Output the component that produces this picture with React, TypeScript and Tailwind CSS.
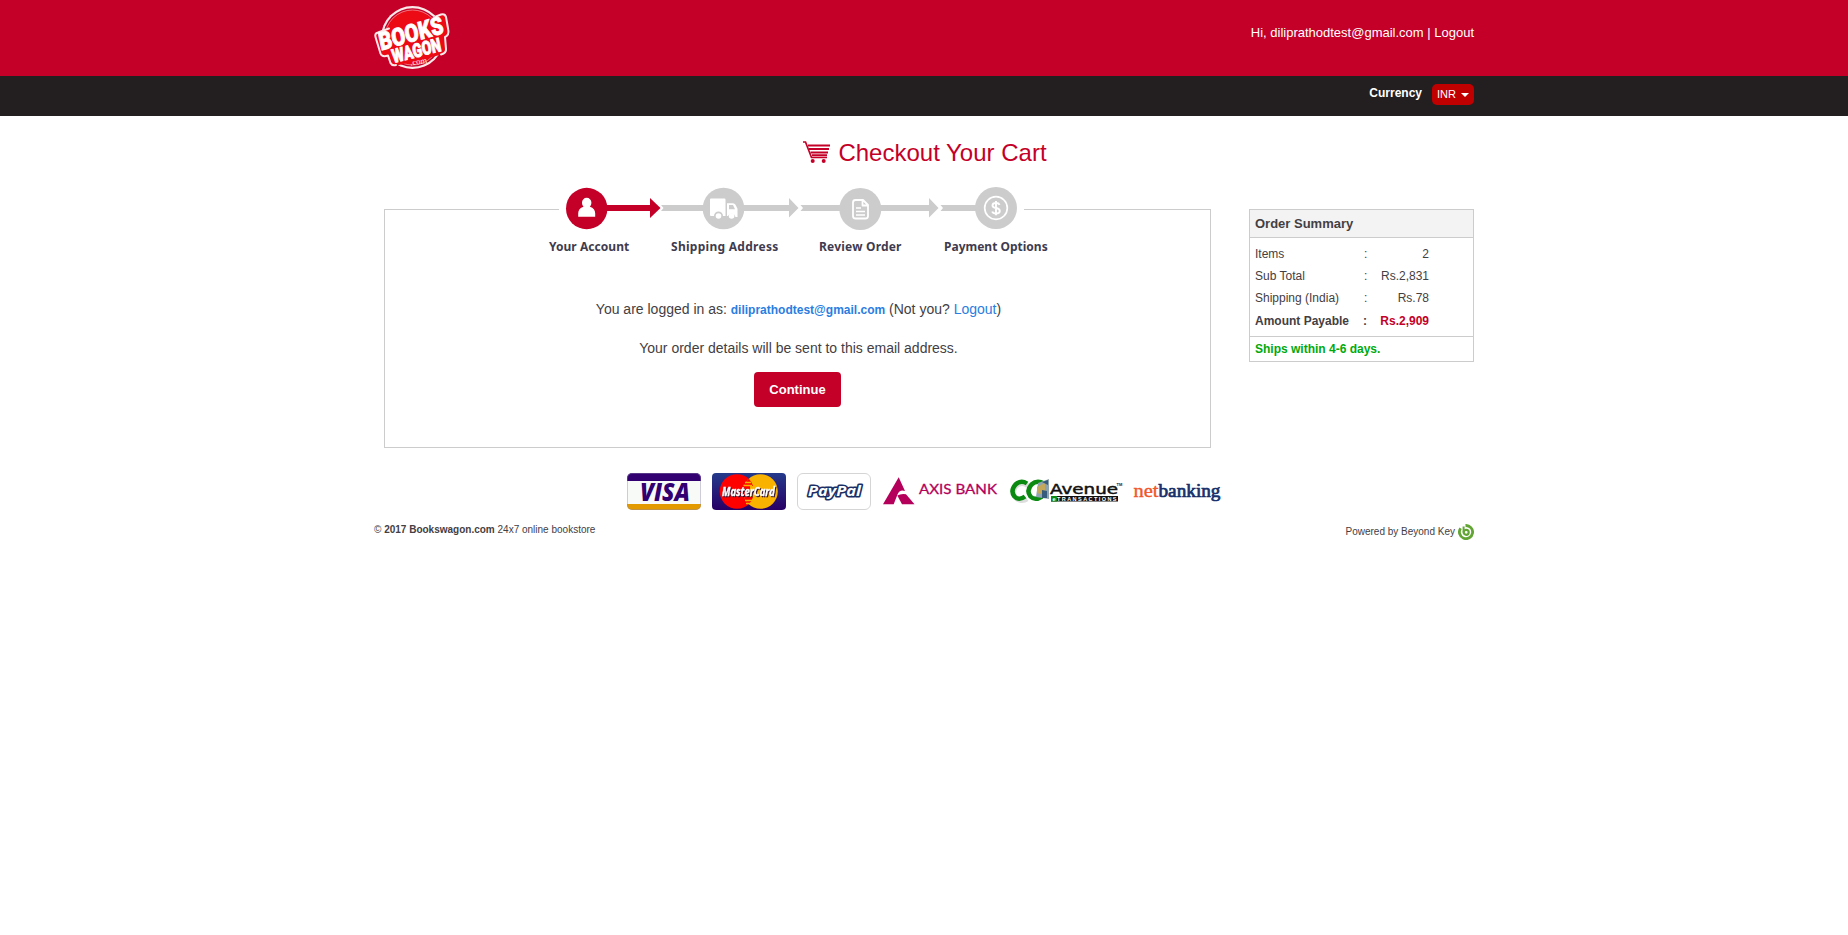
import React from "react";

function BooksWagonLogo() {
  return (
    <svg width="78" height="66" viewBox="0 0 78 66" className="overflow-visible" role="img" aria-label="BooksWagon.com">
      <circle cx="38.500" cy="31.500" r="31.500" fill="#fbe9ea" />
      <circle cx="38.500" cy="31.500" r="29.300" fill="#c40028" />
      <circle cx="38.500" cy="31.500" r="27.500" fill="#ec0a14" stroke="#f6a5ab" strokeWidth=".7" />
      <path d="M1.500 31Q.5 27.500 4 26.500L14 23.500L60 11L67 8.500Q71 7.500 72 11L74 24Q75 29 71 31L72 43Q72.500 47 68 48.500L23 59.500Q18 60.500 16.500 57L14 49.500Q8 51.500 6.500 47.500Z" fill="#ec0a14" />
      <path d="M15 22.500L4 26.500Q.5 27.500 1.500 31L6.500 47.500Q8 51.500 14 49.500L16.500 57Q18 60 22 59M62 10.500L67 8.500Q71 7.500 72 11L74.300 24Q75.300 29 71 31L72 43Q72.500 47 67 48.500" fill="none" stroke="#fbe9ea" strokeWidth="2" strokeLinejoin="round" strokeLinecap="round" />
      <g fill="#fff" stroke="#fff" strokeWidth="0.9" className="font-['Roboto',sans-serif] font-black">
        <text transform="translate(7 44.500) rotate(-15.500) skewX(-3)" fontSize="24.500" textLength="66" lengthAdjust="spacingAndGlyphs">BOOKS</text>
        <text transform="translate(19.500 57) rotate(-14) skewX(-2)" fontSize="19" textLength="50" lengthAdjust="spacingAndGlyphs">WAGON</text>
      </g>
      <text transform="translate(36.500 59.500) rotate(-9)" fontSize="8.500" fill="#fff" textLength="17" className="font-['Liberation_Serif',serif]">.com</text>
    </svg>
  );
}

function CartIcon() {
  return (
    <svg width="27" height="22" viewBox="0 0 27 22" fill="none" stroke="#c40028">
      <path d="M0 1H2.500L8.500 16.500H24" strokeWidth="1.700" />
      <path d="M5 4.500H27M6 8H26M7.500 11.500H25M9 14.300H24" strokeWidth="2" />
      <g fill="#c40028" stroke="none">
        <circle cx="9.700" cy="20" r="2" />
        <circle cx="20.700" cy="20" r="2" />
      </g>
    </svg>
  );
}

function StepTrack() {
  return (
    <svg width="465" height="46" viewBox="559 186 465 46" className="ml-[174px] block bg-white">
      <g fill="#c40028">
        <circle cx="586.700" cy="208.500" r="20.700" />
        <path d="M605 205H650V198L660.500 208L650 218V211H605Z" />
      </g>
      <g fill="#ccc">
        <path d="M661 205H789V198L798.500 208L789 217.500V211H661L663.500 208Z" />
        <path d="M800.500 205H929V198L938.500 208L929 217.500V211H800.500L803 208Z" />
        <path d="M940.500 205H980V211H940.500L943 208Z" />
        <circle cx="723.500" cy="208.500" r="20.800" />
        <circle cx="860.300" cy="209" r="21" />
        <circle cx="996" cy="208" r="21" />
      </g>
      <g fill="#fff">
        <path d="M582 202.500a4.700 4.700 0 0 1 9.400 0c0 1.800-.6 3.200-1.500 4.200 3.500 1 5.300 3.500 5.300 6.800v3.300h-17v-3.300c0-3.300 1.800-5.800 5.300-6.800-.9-1-1.500-2.400-1.500-4.200Z" />
        <path d="M710.500 198.500h14q1 0 1 1V216h-2.500a4.500 4.500 0 0 0-9 0H711q-1 0-1-1v-15.500q0-1 1-1Z" />
        <path fillRule="evenodd" d="M727 203.300h6q1.500 0 2.500 1.500l2 4V217h-2a4 4 0 0 0-7.500-1h-1ZM729 205v4.200h6l-2-4.200Z" />
        <circle cx="718.500" cy="216" r="2.800" />
        <circle cx="731.600" cy="216" r="2.800" />
      </g>
      <g fill="none" stroke="#fff" strokeWidth="1.800" strokeLinejoin="round">
        <path d="M863 200H855.500Q853 200 853 202.500V216Q853 218.500 855.500 218.500H865.500Q868 218.500 868 216V205ZM862.500 200V205.500H868" />
        <path d="M856 208H861M856 211.500H865M856 215H865" strokeWidth="1.600" />
        <circle cx="996" cy="208" r="11.300" strokeWidth="1.700" />
        <path d="M999.600 204.800Q998.800 203 996 203Q992.500 203 992.500 205.400Q992.500 207.400 996 208Q999.800 208.700 999.800 211Q999.800 213.500 996 213.500Q993 213.500 992.200 211.500M996 201V215.300" strokeWidth="1.900" />
      </g>
    </svg>
  );
}

function VisaCard() {
  return (
    <svg width="74" height="37" viewBox="0 0 74 37">
      <defs><clipPath id="visa-clip"><rect width="74" height="37" rx="5" /></clipPath></defs>
      <g clipPath="url(#visa-clip)">
        <rect width="74" height="37" fill="#f8faf8" />
        <rect width="74" height="8" fill="#330072" />
        <rect y="31" width="74" height="6" fill="#e39a00" />
      </g>
      <rect x=".5" y=".5" width="73" height="36" rx="4.500" fill="none" stroke="#8d86a8" strokeOpacity=".4" />
      <text x="13" y="28" fontSize="24.500" fill="#330072" textLength="50" lengthAdjust="spacingAndGlyphs" className="font-['Open_Sans',sans-serif] font-extrabold italic">VISA</text>
    </svg>
  );
}

function MasterCard() {
  return (
    <svg width="74" height="37" viewBox="0 0 74 37" className="overflow-visible">
      <defs>
        <linearGradient id="mc-blue" x1="0" y1="0" x2="0" y2="1">
          <stop offset="0" stopColor="#243a8a" />
          <stop offset="1" stopColor="#280065" />
        </linearGradient>
      </defs>
      <rect width="74" height="37" rx="4" fill="url(#mc-blue)" />
      <circle cx="25" cy="18.500" r="17.300" fill="#f00" />
      <circle cx="48.500" cy="18.500" r="17.300" fill="#f9b200" />
      <path d="M36.800 5.800A17.300 17.300 0 0 0 36.800 31.200A17.300 17.300 0 0 0 41 24H38V13H41A17.300 17.300 0 0 0 36.800 5.800Z" fill="#f00" />
      <path d="M33 9.500H39M31.500 12.500H40M33 27.500H40M34 30.500H38" stroke="#f9b200" strokeWidth="1.300" />
      <text x="10" y="23" fontSize="12.500" fill="#fff" stroke="#fff" strokeWidth=".4" textLength="53" lengthAdjust="spacingAndGlyphs" className="font-['Open_Sans',sans-serif] font-bold italic drop-shadow-[1px_1px_0_#301030]">MasterCard</text>
    </svg>
  );
}

function PayPalCard() {
  return (
    <svg width="74" height="37" viewBox="0 0 74 37">
      <rect x=".5" y=".5" width="73" height="36" rx="5.500" fill="#fff" stroke="#d5d5d5" />
      <text x="11" y="23" fontSize="15" fill="#fff" stroke="#1b2f66" strokeWidth="3.200" strokeLinejoin="round" paintOrder="stroke" textLength="53" lengthAdjust="spacingAndGlyphs" className="font-['Open_Sans',sans-serif] font-bold italic">PayPal</text>
    </svg>
  );
}

function AxisBank() {
  return (
    <svg width="116" height="37" viewBox="882 473 116 37" fill="#b5005b">
      <path d="M898.700 477.300L905 491Q899.500 489.300 897.500 494.500L893.700 504.300H883Z" />
      <path d="M897.300 495.600Q901 493.500 906 494.300L914.500 504.300H902Z" />
      <text x="919" y="493.800" fontSize="13.500" stroke="#b5005b" strokeWidth=".3" textLength="78" lengthAdjust="spacingAndGlyphs" className="font-['Lato',sans-serif] font-normal">AXIS BANK</text>
    </svg>
  );
}

function CCAvenue() {
  return (
    <svg width="114" height="37" viewBox="1009 473 114 37">
      <path d="M1026 484A8.500 8.500 0 1 0 1025 497" transform="translate(2 2)" fill="none" stroke="#ddd" strokeWidth="5" />
      <g fill="none" stroke="#0a8a10" strokeWidth="4.500">
        <path d="M1027 483.500Q1021 479.500 1015.500 484.500Q1010 491 1014.500 496.500Q1019 501 1025 496.500" />
        <path d="M1044 483.500Q1037 479.500 1031.500 484.500Q1026 491 1030.500 496.500Q1035 501 1042 496.500" />
      </g>
      <path d="M1038 483L1049 479V499L1036 497Z" fill="#8fa3ae" />
      <path d="M1037 487L1045 483V495L1037 493Z" fill="#c6a85a" />
      <path d="M1042 490L1047 491V498H1042ZM1042 482L1048 480V485Z" fill="#365b7c" />
      <text x="1050" y="494" fontSize="14.500" fill="#111" stroke="#111" strokeWidth=".5" textLength="68" lengthAdjust="spacingAndGlyphs" className="font-['DejaVu_Sans',sans-serif]">Avenue</text>
      <text x="1116.500" y="486" fontSize="4" fill="#222" className="font-['Liberation_Sans',sans-serif] font-bold">TM</text>
      <rect x="1051" y="496" width="67" height="5.500" fill="#111" />
      <rect x="1051" y="496" width="6" height="5.500" fill="#0a8a10" />
      <text x="1052.500" y="500.800" fontSize="5.500" fill="#fff" textLength="64" className="font-['Liberation_Sans',sans-serif] font-bold">eTRANSACTIONS</text>
    </svg>
  );
}

function NetBanking() {
  return (
    <svg width="90" height="37" viewBox="1133 473 90 37" className="font-['Liberation_Serif',serif]">
      <text x="1133.500" y="496.700" fontSize="18.500" fill="#f0562b" stroke="#f0562b" strokeWidth=".4" textLength="25" lengthAdjust="spacingAndGlyphs">net</text>
      <text x="1158.500" y="496.700" fontSize="18.500" fill="#16306b" stroke="#16306b" strokeWidth=".7" textLength="62" lengthAdjust="spacingAndGlyphs">banking</text>
    </svg>
  );
}

function BeyondKeyIcon() {
  return (
    <svg width="16" height="16" viewBox="0 0 16 16" fill="none" stroke="#62a535">
      <path d="M7.500 1.500A6.600 6.600 0 1 1 2.600 4.300" strokeWidth="2.800" />
      <path d="M5.600 2.500V8.500" strokeWidth="2" />
      <circle cx="8.200" cy="8.300" r="2.500" strokeWidth="2.200" />
    </svg>
  );
}

const summary = [
  { label: "Items", value: "2" },
  { label: "Sub Total", value: "Rs.2,831" },
  { label: "Shipping (India)", value: "Rs.78" },
];

export default function App() {
  return (
    <div className="min-h-[935px] bg-white font-['Liberation_Sans',Arial,sans-serif] text-[#434043]">
      <header>
        <div className="h-[76px] bg-[#c40028]">
          <div className="mx-auto flex w-[1100px] items-start justify-between">
            <a className="mt-1.5 block"><BooksWagonLogo /></a>
            <p className="mt-6 text-[13px] leading-[17px] text-white">Hi, diliprathodtest@gmail.com | Logout</p>
          </div>
        </div>
        <div className="h-10 bg-[#231f20]">
          <div className="mx-auto flex w-[1100px] items-start justify-end pt-2 text-white">
            <span className="mr-2.5 text-xs font-bold leading-[18px]">Currency</span>
            <button className="flex h-[21px] w-[42px] items-center gap-[5px] rounded-[5px] bg-[#c00000] pl-[5px] text-[11px] leading-[21px]">
              INR
              <svg width="8" height="4" viewBox="0 0 8 4" fill="#fff" className="mt-px"><path d="M0 0H8L4 4Z" /></svg>
            </button>
          </div>
        </div>
      </header>

      <h1 className="flex h-[93px] items-start justify-center gap-2 pt-[23px] pl-[2px] text-2xl leading-7 text-[#c40028]">
        <span className="mt-0.5"><CartIcon /></span>
        Checkout Your Cart
      </h1>

      <main className="mx-auto flex w-[1100px] items-start justify-between pl-2.5">
        <section className="h-[239px] w-[827px] border border-[#ccc]">
          <div className="-mt-6"><StepTrack /></div>
          <div className="ml-[164px] flex pt-[7px] font-['Noto_Sans',sans-serif] text-[12px] font-bold leading-4 whitespace-nowrap text-[#3f3b4e]">
            <span className="w-[122px] tracking-[0.05px]">Your Account</span>
            <span className="w-[148px] tracking-[0.28px]">Shipping Address</span>
            <span className="w-[125px] tracking-[0.2px]">Review Order</span>
            <span>Payment Options</span>
          </div>
          <p className="mt-[46px] pl-[2px] text-center text-sm leading-4">
            You are logged in as: <a className="text-xs leading-none font-bold text-[#2a7de1]">diliprathodtest@gmail.com</a> (Not you? <a className="text-[#2a7de1]">Logout</a>)
          </p>
          <p className="mt-[23px] pl-[2px] text-center text-sm leading-4">Your order details will be sent to this email address.</p>
          <button className="mx-auto mt-4 block h-[35px] w-[87px] rounded bg-[#c40028] text-[13px] font-bold text-white">Continue</button>
        </section>

        <aside className="h-[153px] w-[225px] border border-[#ccc] text-xs">
          <h2 className="h-7 border-b border-[#ccc] bg-[#f3f3f3] pl-[5px] text-[13px] font-bold leading-[27px]">Order Summary</h2>
          <div className="h-[99px] border-b border-[#ccc] pl-[5px] pt-[5px]">
            {summary.map((row) => (
              <div key={row.label} className="flex h-[22px] w-[174px] leading-[22px]">
                <span className="w-[109px]">{row.label}</span>
                <span>:</span>
                <span className="flex-1 text-right">{row.value}</span>
              </div>
            ))}
            <div className="flex h-6 w-[174px] font-bold leading-6">
              <span className="w-[108px]">Amount Payable</span>
              <span>:</span>
              <span className="flex-1 text-right text-[#c40028]">Rs.2,909</span>
            </div>
          </div>
          <p className="pl-[5px] font-bold leading-6 text-[#00aa0e]">Ships within 4-6 days.</p>
        </aside>
      </main>

      <footer className="mx-auto w-[1100px] text-[10px]">
        <div className="flex pl-[253px] pt-[25px]">
          <span className="mr-[11px]"><VisaCard /></span>
          <span className="mr-[11px]"><MasterCard /></span>
          <span className="mr-[11px]"><PayPalCard /></span>
          <span className="mr-[11px]"><AxisBank /></span>
          <span className="mr-[10px]"><CCAvenue /></span>
          <NetBanking />
        </div>
        <div className="flex items-start justify-between pt-[14px]">
          <p className="leading-3">© <b>2017 Bookswagon.com</b> 24x7 online bookstore</p>
          <p className="flex items-center gap-[3px] leading-4">Powered by Beyond Key <BeyondKeyIcon /></p>
        </div>
      </footer>
    </div>
  );
}
